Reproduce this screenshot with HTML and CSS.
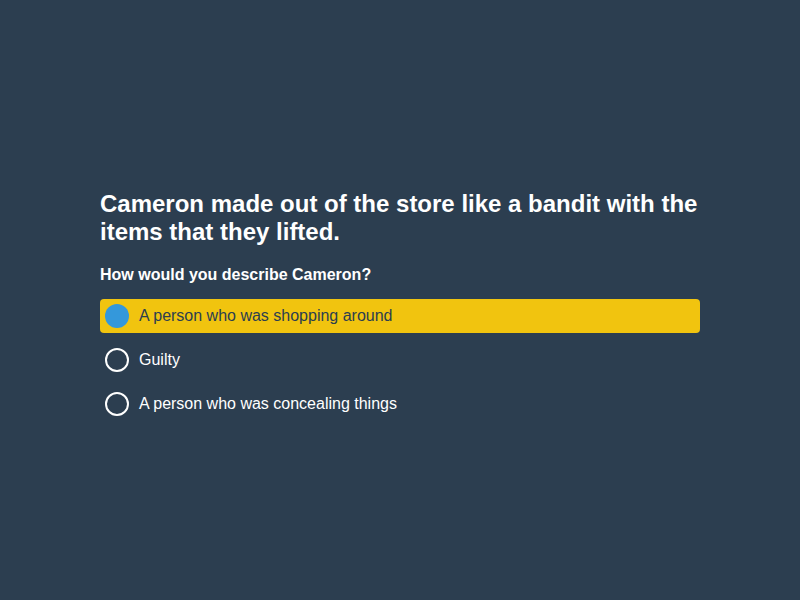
FILE: index.html
```html
<!DOCTYPE html>
<html lang="en">
<head>
<meta charset="utf-8">
<title>Quiz</title>
<link rel="stylesheet" href="styles.css">
</head>
<body>
<main class="page">
  <section class="quiz">
    <h1 class="question">Cameron made out of the store like a bandit with the items that they lifted.</h1>
    <h2 class="prompt">How would you describe Cameron?</h2>
    <ul class="options">
      <li class="option selected"><span class="radio"></span><span class="label">A person who was shopping around</span></li>
      <li class="option"><span class="radio"></span><span class="label">Guilty</span></li>
      <li class="option"><span class="radio"></span><span class="label">A person who was concealing things</span></li>
    </ul>
  </section>
</main>
</body>
</html>
```
FILE: styles.css
```css
html, body {
  margin: 0;
  padding: 0;
}
body {
  background: #2c3e50;
  font-family: "Liberation Sans", Arial, sans-serif;
  color: #ffffff;
}
.page {
  box-sizing: border-box;
  height: 600px;
  padding-top: 10px;
  display: flex;
  align-items: center;
  justify-content: center;
}
.quiz {
  width: 600px;
}
.question {
  margin: 0 0 20px;
  font-size: 24px;
  line-height: 28px;
  font-weight: bold;
}
.prompt {
  margin: 0 0 15px;
  font-size: 16px;
  line-height: 18px;
  font-weight: bold;
}
.options {
  list-style: none;
  margin: 0;
  padding: 0;
  display: flex;
  flex-direction: column;
  gap: 10px;
}
.option {
  height: 34px;
  display: flex;
  align-items: center;
  gap: 10px;
  padding-left: 5px;
  border-radius: 4px;
  font-size: 16px;
}
.option.selected {
  background: #f1c40f;
  color: #2c3e50;
}
.radio {
  width: 24px;
  height: 24px;
  box-sizing: border-box;
  border: 2px solid #ffffff;
  border-radius: 50%;
}
.option.selected .radio {
  background: #3498db;
  border: none;
}
```
